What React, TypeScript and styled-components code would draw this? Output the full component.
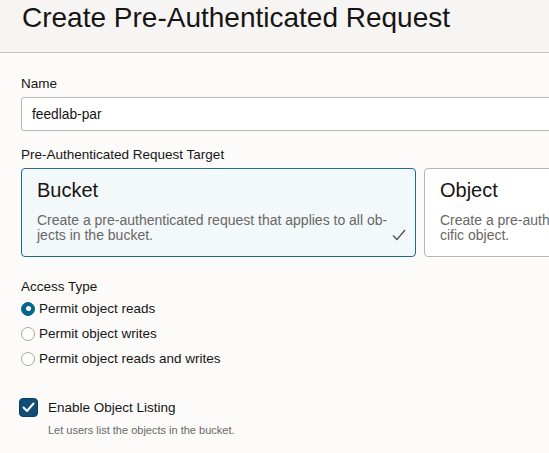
import React from "react";
import styled, { createGlobalStyle } from "styled-components";

const Global = createGlobalStyle`
  html, body {
    margin: 0;
    padding: 0;
    overflow: hidden;
    background: #fcfbfa;
    font-family: "Liberation Sans", Arial, sans-serif;
    color: #161513;
  }
  * { box-sizing: border-box; }
`;

const Page = styled.div`
  width: 549px;
  height: 453px;
  overflow: hidden;
`;

const Header = styled.header`
  height: 53px;
  padding: 2px 0 0 22px;
  background: #f6f5f4;
  border-bottom: 1px solid #c4c2bf;
`;

const Title = styled.h1`
  margin: 0;
  font-size: 28px;
  line-height: 32px;
  font-weight: 400;
  color: #161513;
  white-space: nowrap;
`;

const Form = styled.div`
  width: 860px;
  padding: 23px 0 0 21px;
  display: flex;
  flex-direction: column;
`;

const Label = styled.div<{ $top?: number }>`
  font-size: 13.5px;
  line-height: 16px;
  margin-top: ${(p) => p.$top ?? 0}px;
  color: #161513;
`;

const Input = styled.div`
  margin-top: 5px;
  height: 34px;
  display: flex;
  align-items: center;
  padding: 0 10px;
  border: 1px solid #b9b7b4;
  border-radius: 3px;
  background: #ffffff;
  font-size: 13.75px;
  color: #161513;
`;

const Cards = styled.div`
  margin-top: 5px;
  display: grid;
  grid-template-columns: 395px 395px;
  gap: 8px;
`;

const Card = styled.div<{ $selected?: boolean }>`
  position: relative;
  height: 89px;
  padding: 9px 24px 0 15px;
  border: 1px solid ${(p) => (p.$selected ? "#1e6b8c" : "#b8b6b3")};
  border-radius: 4px;
  background: ${(p) => (p.$selected ? "#f3f8fb" : "#ffffff")};
`;

const CardTitle = styled.div`
  font-size: 20px;
  line-height: 24px;
  color: #161513;
`;

const CardText = styled.div`
  margin-top: 11px;
  font-size: 14px;
  line-height: 15px;
  color: #6a6764;
`;

const Check = styled.svg`
  position: absolute;
  right: 9px;
  bottom: 15px;
`;

const RadioGroup = styled.div`
  margin-top: 1px;
  display: flex;
  flex-direction: column;
`;

const RadioRow = styled.div`
  height: 25px;
  display: flex;
  align-items: center;
  gap: 4px;
  font-size: 13.5px;
  color: #161513;
`;

const RadioDot = styled.span<{ $checked?: boolean }>`
  width: 14px;
  height: 14px;
  border-radius: 50%;
  flex: none;
  display: flex;
  align-items: center;
  justify-content: center;
  border: 1px solid ${(p) => (p.$checked ? "#06668a" : "#aaa8a5")};
  background: ${(p) => (p.$checked ? "#06668a" : "#ffffff")};
  &::after {
    content: "";
    display: ${(p) => (p.$checked ? "block" : "none")};
    width: 5px;
    height: 5px;
    border-radius: 50%;
    background: #ffffff;
  }
`;

const CheckRow = styled.div`
  margin-top: 27px;
  margin-left: -2px;
  height: 19px;
  display: flex;
  align-items: center;
  gap: 10px;
  font-size: 13.5px;
  color: #161513;
`;

const CheckBox = styled.span`
  width: 19px;
  height: 19px;
  flex: none;
  border-radius: 4px;
  background: #114d76;
  border: 1px solid #0c3d5e;
  display: flex;
  align-items: center;
  justify-content: center;
`;

const Help = styled.div`
  margin-top: 7px;
  padding-left: 27px;
  font-size: 11px;
  line-height: 13px;
  color: #6a6764;
`;

const options = [
  { label: "Permit object reads", checked: true },
  { label: "Permit object writes", checked: false },
  { label: "Permit object reads and writes", checked: false },
];

export default function App() {
  return (
    <Page>
      <Global />
      <Header>
        <Title>Create Pre-Authenticated Request</Title>
      </Header>
      <Form>
        <Label>Name</Label>
        <Input>feedlab-par</Input>

        <Label $top={16}>Pre-Authenticated Request Target</Label>
        <Cards>
          <Card $selected>
            <CardTitle>Bucket</CardTitle>
            <CardText>
              Create a pre-authenticated request that applies to all ob{"\u00AD"}jects in the bucket.
            </CardText>
            <Check width="14" height="12" viewBox="0 0 14 12">
              <polyline
                points="1,6.5 5,10.5 13,1"
                fill="none"
                stroke="#4f4d4a"
                strokeWidth="1.2"
              />
            </Check>
          </Card>
          <Card>
            <CardTitle>Object</CardTitle>
            <CardText>
              Create a pre-authenticated request that applies to a spe{"\u00AD"}cific object.
            </CardText>
          </Card>
        </Cards>

        <Label $top={22}>Access Type</Label>
        <RadioGroup>
          {options.map((o) => (
            <RadioRow key={o.label}>
              <RadioDot $checked={o.checked} />
              {o.label}
            </RadioRow>
          ))}
        </RadioGroup>

        <CheckRow>
          <CheckBox>
            <svg width="13" height="11" viewBox="0 0 13 11">
              <polyline
                points="1.5,5.5 5,9 11.5,1.5"
                fill="none"
                stroke="#ffffff"
                strokeWidth="2"
                strokeLinecap="round"
                strokeLinejoin="round"
              />
            </svg>
          </CheckBox>
          Enable Object Listing
        </CheckRow>
        <Help>Let users list the objects in the bucket.</Help>
      </Form>
    </Page>
  );
}
